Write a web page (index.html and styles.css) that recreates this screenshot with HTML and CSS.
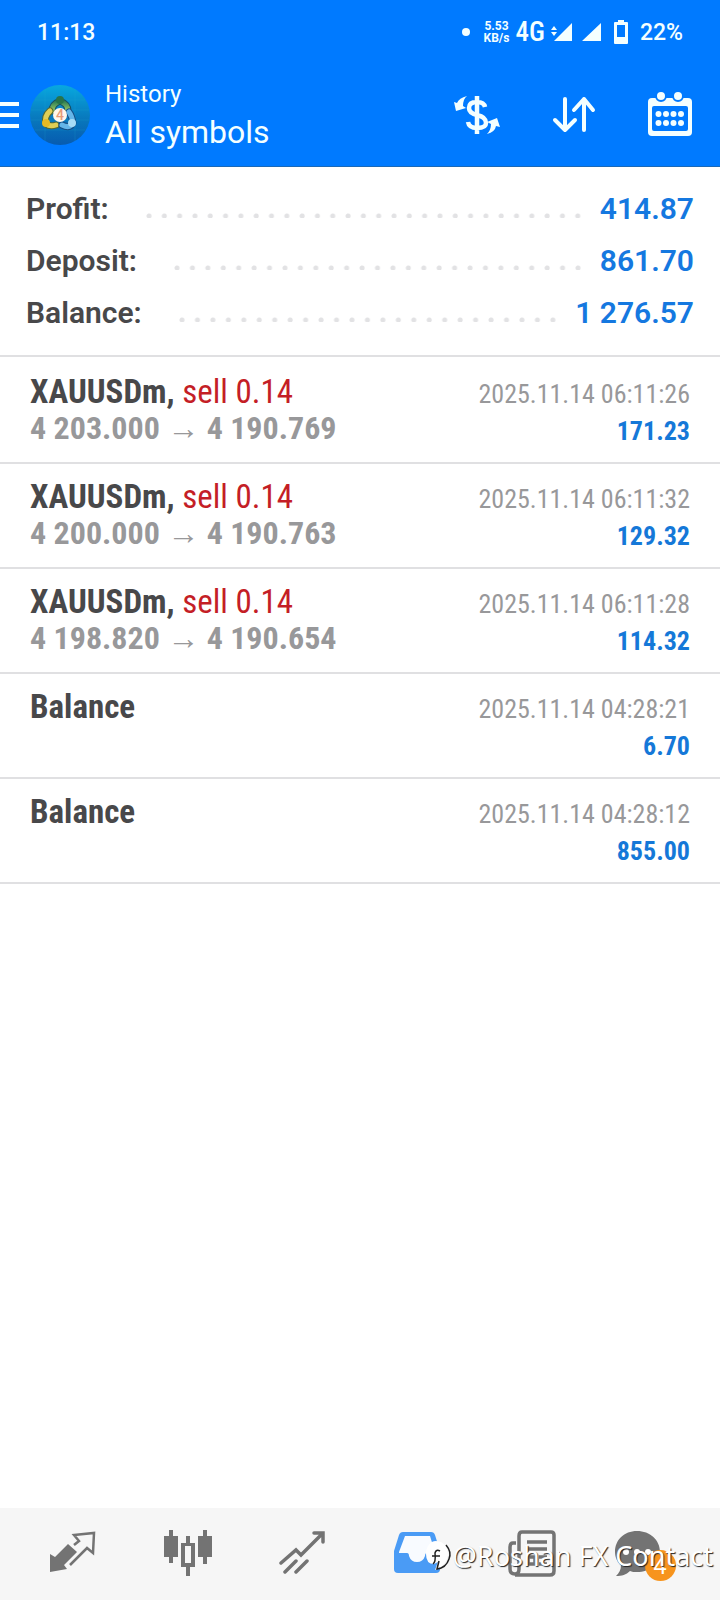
FILE: index.html
```html
<!DOCTYPE html>
<html lang="en">
<head>
<meta charset="utf-8">
<meta name="viewport" content="width=device-width, initial-scale=1">
<title>History</title>
<link rel="stylesheet" href="styles.css">
</head>
<body>
<div class="app">
  <header class="header">
    <div class="status">
      <span class="clock">11:13</span>
      <div class="status-right">
        <span class="dot"></span>
        <span class="speed">5.53<br>KB/s</span>
        <span class="network">4G</span>
        <svg class="signals" viewBox="0 0 50 20" width="50" height="20" fill="currentColor" aria-hidden="true">
          <path d="M0 8 3 4 6 8zM0 10h6l-3 4zM21 1v18H3zM50 1v18H31z"/>
        </svg>
        <svg width="16" height="24" viewBox="0 0 16 24" aria-hidden="true">
          <path d="M5 0h6v2h3q1 0 1 1v20q0 1-1 1H2q-1 0-1-1V3q0-1 1-1h3z" fill="currentColor"/><path d="M4 5h8v12H4z" class="battery-gap"/>
        </svg>
        <span class="percent">22%</span>
      </div>
    </div>
    <div class="toolbar">
      <button class="icon-button menu" aria-label="Menu">
        <svg width="19" height="28" viewBox="0 0 19 28" fill="currentColor"><path d="M0 1h19v4H0zM0 12h19v4H0zM0 23h19v4H0z"/></svg>
      </button>
      <svg class="logo" width="60" height="60" viewBox="0 0 60 60" aria-hidden="true">
        <defs>
          <linearGradient id="sea" x2="0" y2="1"><stop offset="0" stop-color="#08a8df"/><stop offset=".55" stop-color="#0879bd"/><stop offset="1" stop-color="#075baf"/></linearGradient>
          <linearGradient id="green" x2="0" y2="1"><stop stop-color="#297b53"/><stop offset="1" stop-color="#9bcb65"/></linearGradient>
        </defs>
        <circle cx="30" cy="30" r="30" fill="url(#sea)"/>
        <path d="M5 15h50M1 25h58M1 35h58M5 45h50M15 4v52M45 4v52" stroke="#27b5da" stroke-opacity=".18" fill="none"/>
        <g fill="none" stroke-linecap="round" stroke-linejoin="round">
          <path d="M22 26q0-7 8-10 8 3 8 10" stroke="#174f62" stroke-width="7"/>
          <path d="M22 26q0-7 8-10 8 3 8 10" stroke="url(#green)" stroke-width="5"/>
          <path d="M20 26q-6 5-4 13 4 3 10 1" stroke="#55682f" stroke-width="7"/>
          <path d="M20 26q-6 5-4 13 4 3 10 1" stroke="#dfce55" stroke-width="5"/>
          <path d="M32 40q8 4 11-2-1-7-4-11" stroke="#164d83" stroke-width="7"/>
          <path d="M32 40q8 4 11-2-1-7-4-11" stroke="#65b6e9" stroke-width="5"/>
        </g>
        <circle cx="30" cy="15" r="4" fill="#287449"/><circle cx="16" cy="38" r="4" fill="#e6b925"/><circle cx="42" cy="38" r="4" fill="#a7dcf6"/>
        <circle cx="30" cy="30" r="7" fill="#fff7ec"/>
        <text x="30" y="35" text-anchor="middle" class="logo-number">4</text>
      </svg>
      <div class="titles">
        <span class="title">History</span>
        <h1 class="subtitle">All symbols</h1>
      </div>
      <div class="actions">
        <button class="icon-button" aria-label="Currency">
          <svg width="46" height="40" viewBox="0 0 46 40" fill="none" stroke="currentColor">
            <path d="M31 12q-1-5-8-5-8 0-8 6 0 5 8 7 9 2 9 8 0 5-9 5-8 0-9-6M23 1v38" stroke-width="4.500"/>
            <path d="M13 1Q5 3 3 8L0 7l2 9 10-3-3-2q0-7 4-10zM33 39q8-2 9-8l4 1-3-9-10 4 4 2q0 6-4 10z" fill="currentColor" stroke="none"/>
          </svg>
        </button>
        <button class="icon-button" aria-label="Sort">
          <svg width="42" height="36" viewBox="0 0 42 36" fill="none" stroke="currentColor" stroke-width="4" stroke-linecap="round" stroke-linejoin="round"><path d="M12 2v31M2 23l10 10 10-10M31 33V2M21 13 31 2l9 11"/></svg>
        </button>
        <button class="icon-button" aria-label="Date range">
          <svg width="44" height="44" viewBox="0 0 44 44">
            <rect y="5" width="44" height="38" rx="4" fill="currentColor"/>
            <rect x="4" y="13" width="36" height="25" rx="2" class="cut"/>
            <g fill="currentColor" class="pegs"><circle cx="13" cy="3" r="5"/><circle cx="30" cy="3" r="5"/></g>
            <g fill="currentColor"><circle cx="10.500" cy="21" r="3"/><circle cx="18" cy="21" r="3"/><circle cx="25.500" cy="21" r="3"/><circle cx="33" cy="21" r="3"/><circle cx="10.500" cy="30" r="3"/><circle cx="18" cy="30" r="3"/><circle cx="25.500" cy="30" r="3"/><circle cx="33" cy="30" r="3"/></g>
          </svg>
        </button>
      </div>
    </div>
  </header>

  <main class="content">
    <dl class="summary">
      <div class="total"><dt>Profit:</dt><dd>414.87</dd></div>
      <div class="total"><dt>Deposit:</dt><dd>861.70</dd></div>
      <div class="total"><dt>Balance:</dt><dd>1 276.57</dd></div>
    </dl>
    <ul class="deals">
      <li class="deal">
        <div class="deal-main"><span class="symbol">XAUUSDm, <span class="side">sell 0.14</span></span><span class="prices">4 203.000 <span class="arrow">→</span> 4 190.769</span></div>
        <div class="deal-info"><time>2025.11.14 06:11:26</time><span class="amount">171.23</span></div>
      </li>
      <li class="deal">
        <div class="deal-main"><span class="symbol">XAUUSDm, <span class="side">sell 0.14</span></span><span class="prices">4 200.000 <span class="arrow">→</span> 4 190.763</span></div>
        <div class="deal-info"><time>2025.11.14 06:11:32</time><span class="amount">129.32</span></div>
      </li>
      <li class="deal">
        <div class="deal-main"><span class="symbol">XAUUSDm, <span class="side">sell 0.14</span></span><span class="prices">4 198.820 <span class="arrow">→</span> 4 190.654</span></div>
        <div class="deal-info"><time>2025.11.14 06:11:28</time><span class="amount">114.32</span></div>
      </li>
      <li class="deal">
        <div class="deal-main"><span class="symbol">Balance</span></div>
        <div class="deal-info"><time>2025.11.14 04:28:21</time><span class="amount">6.70</span></div>
      </li>
      <li class="deal">
        <div class="deal-main"><span class="symbol">Balance</span></div>
        <div class="deal-info"><time>2025.11.14 04:28:12</time><span class="amount">855.00</span></div>
      </li>
    </ul>
  </main>

  <nav class="tabs">
    <button class="tab" aria-label="Quotes">
      <svg width="48" height="48" viewBox="0 0 48 48"><path d="M1 24 6 27 19 14 28 22 15 35 18 39 1 42z" fill="currentColor"/><path d="m25 15 5-4-5-6 20-2-1 20-6-5-17 17" fill="none" stroke="currentColor" stroke-width="2.500"/></svg>
    </button>
    <button class="tab" aria-label="Charts">
      <svg width="48" height="48" viewBox="0 0 48 48" fill="currentColor"><path d="M0 6h5V0h4v6h5v21H9v6H5v-6H0zM34 6h5V0h4v6h5v21h-5v7h-4v-7h-5zM17 13h5V6h4v7h5v24h-5v9h-4v-9h-5zM21 16v17h6V16z" fill-rule="evenodd"/></svg>
    </button>
    <button class="tab" aria-label="Trade">
      <svg width="48" height="48" viewBox="0 0 48 48" fill="none" stroke="currentColor" stroke-width="3.500" stroke-linecap="round"><path d="m2 33 15-13 5 5L43 4M35 3h9v9M6 42l11-11M17 42l11-11"/></svg>
    </button>
    <button class="tab active" aria-label="History">
      <svg width="48" height="48" viewBox="0 0 48 48"><path d="M10 2h28q3 0 4 3l5 16v18q0 4-4 4H5q-4 0-4-4V21L6 5q1-3 4-3z" fill="currentColor"/><path d="m12 6-6 16v1h8q2 0 2 3 2 6 8 6t8-6q0-3 2-3h8v-1L37 6z" class="tray-gap"/></svg>
    </button>
    <button class="tab" aria-label="News">
      <svg width="48" height="48" viewBox="0 0 48 48" fill="none" stroke="currentColor" stroke-width="3.500"><path d="M8 13H5q-3 0-3 4v22q0 5 5 5 4 0 4-5V6q0-4 3-4h29q3 0 3 3v36q0 4-4 4H7M19 12h20M19 19h20M20 27h7v7h-7zM31 27h8M31 34h8"/></svg>
    </button>
    <button class="tab" aria-label="Messages, 4 unread">
      <span class="chat">
        <svg width="46" height="48" viewBox="0 0 46 48"><path d="M22 1c13 0 23 9 23 21S35 42 22 42c-3 0-5 0-7-1-4 4-8 5-14 5 3-3 5-6 5-11-4-3-6-8-6-13C0 10 9 1 22 1z" fill="currentColor"/><g fill="#fff"><circle cx="11" cy="22" r="3"/><circle cx="22" cy="22" r="3"/><circle cx="33" cy="22" r="3"/></g></svg>
        <span class="badge">4</span>
      </span>
    </button>
    <div class="watermark">
      <svg width="28" height="32" viewBox="0 0 28 32" aria-hidden="true"><path d="M11 1C5 1 1 7 1 14q0 10 8 10l4-2-3 8q11-4 13-15 0-9-7-13z" fill="#fff"/><path d="M8 24q3-2 2-11 1-4 5-2M7 16h8M21 5q6 7 3 14-3 9-12 10l2-8" fill="none" stroke="#222" stroke-width="1.500"/></svg>
      <span>@Roshan FX Contact</span>
    </div>
  </nav>
</div>
</body>
</html>
```

FILE: styles.css
```css
* {
  box-sizing: border-box;
}

body {
  margin: 0;
  background: #fff;
  font-family: Roboto, "Liberation Sans", sans-serif;
  color: #48484a;
}

.app {
  min-height: 100vh;
  display: flex;
  flex-direction: column;
}

.header {
  background: #007aff;
  color: #f4ffff;
  border-bottom: 1px solid #1a69b8;
}

.status {
  display: flex;
  align-items: center;
  justify-content: space-between;
  height: 64px;
  padding: 0 37px;
  font-size: 23px;
  font-weight: 500;
}

.status-right {
  display: flex;
  align-items: center;
}

.dot {
  width: 8px;
  height: 8px;
  margin-right: 14px;
  border-radius: 50%;
  background: currentColor;
}

.speed {
  width: 26px;
  margin-right: 6px;
  font-size: 12px;
  line-height: 12px;
  font-weight: 700;
  text-align: center;
  white-space: nowrap;
}

.network {
  margin-right: 6px;
  font-family: "Roboto Condensed", Roboto, sans-serif;
  font-size: 27px;
  font-weight: 500;
}

.signals {
  margin-right: 12px;
}

.percent {
  margin-left: 11px;
}

.battery-gap,
.cut {
  fill: #007aff;
}

.pegs {
  stroke: #007aff;
  stroke-width: 2;
}

.toolbar {
  display: flex;
  align-items: center;
  height: 102px;
  padding: 0 28px 0 0;
}

.icon-button,
.tab {
  display: flex;
  align-items: center;
  justify-content: center;
  padding: 0;
  border: 0;
  background: none;
  color: inherit;
}

.icon-button svg {
  display: block;
  overflow: visible;
}

.logo {
  margin-left: 11px;
}

.logo-number {
  font-size: 14px;
  font-weight: 500;
  fill: #e79b78;
}

.titles {
  flex: 1;
  display: flex;
  flex-direction: column;
  padding-left: 15px;
}

.title {
  font-size: 24px;
  line-height: 34px;
}

.subtitle {
  margin: 0;
  font-size: 32px;
  line-height: 42px;
  font-weight: 400;
}

.actions {
  display: flex;
  align-items: center;
  gap: 53px;
}

.content {
  flex: 1;
}

.summary {
  margin: 0;
  padding: 16px 26px 16px;
  border-bottom: 2px solid #e0e0e2;
  font-size: 30px;
  line-height: 52px;
  font-weight: 600;
}

.total {
  display: flex;
}

.total dt {
  flex: 1;
  display: flex;
}

.total dt::after {
  content: "";
  flex: 1;
  height: 5px;
  margin: 30px 10px 0 37px;
  background: radial-gradient(circle at 3px 3px, #e2e2e4 2px, transparent 3px) 0 0 / 15px 5px space no-repeat;
  background-repeat: space no-repeat;
}

.total dd {
  margin: 0;
  color: #1578e0;
}

.deals {
  margin: 0;
  padding: 2px 0 0;
  list-style: none;
  font-family: "Roboto Condensed", Roboto, sans-serif;
}

.deal {
  display: flex;
  justify-content: space-between;
  height: 105px;
  padding: 14px 30px 0;
  border-bottom: 2px solid #e0e0e2;
}

.deal-main,
.deal-info {
  display: flex;
  flex-direction: column;
  line-height: 37px;
  white-space: nowrap;
}

.deal-main {
  font-size: 33px;
  font-weight: 700;
}

.side {
  color: #c41e26;
  font-weight: 400;
}

.prices {
  color: #98989a;
  font-size: 32px;
}

.arrow {
  font-family: "Liberation Sans", sans-serif;
  line-height: 1;
  font-weight: 400;
}

.deal-info {
  padding-top: 3px;
  font-size: 26px;
  text-align: right;
}

.deal-info time {
  color: #98989a;
}

.amount {
  color: #1578d8;
  font-weight: 700;
}

.tabs {
  position: relative;
  display: grid;
  grid-template-columns: repeat(6, 1fr);
  height: 92px;
  padding: 0 16px;
  background: #f6f6f6;
  color: #737373;
}

.tab svg {
  display: block;
}

.active {
  color: #4a9bf5;
}

.tray-gap {
  fill: #f8fbff;
}

.chat {
  position: relative;
  width: 64px;
}

.badge {
  position: absolute;
  right: 3px;
  bottom: -3px;
  width: 31px;
  height: 31px;
  border-radius: 50%;
  background: #f7941d;
  color: #fff;
  font-size: 24px;
  line-height: 31px;
}

.watermark {
  position: absolute;
  right: 7px;
  top: 30px;
  display: flex;
  align-items: center;
  color: #fff;
  font-family: "Noto Sans", sans-serif;
  font-size: 27px;
  line-height: 36px;
  text-shadow: 1px 1px 1px #222;
  white-space: nowrap;
  pointer-events: none;
}
```
